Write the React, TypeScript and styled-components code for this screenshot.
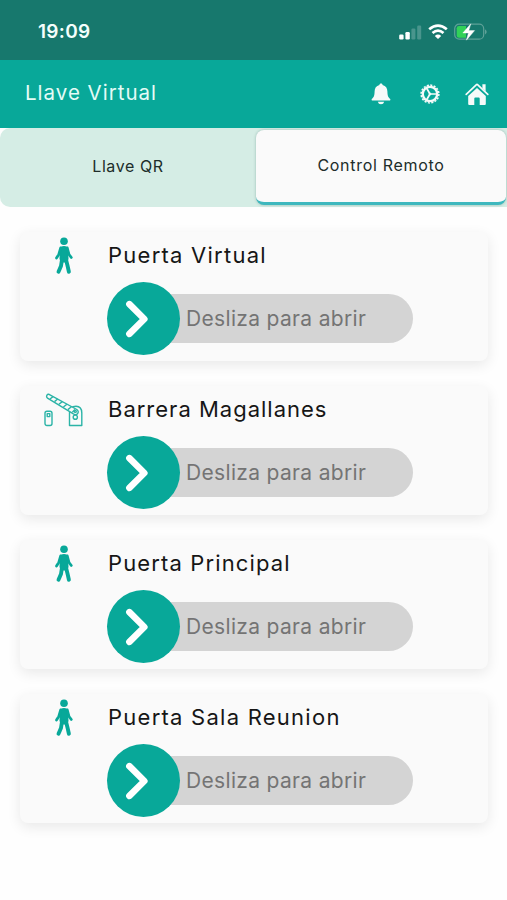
import React from "react";
import styled, { createGlobalStyle } from "styled-components";

const teal = "#08a899";

const GlobalStyle = createGlobalStyle`
  * { box-sizing: border-box; }
  html, body { margin: 0; background: #fefefe; }
  body { font-family: Inter, "Open Sans", sans-serif; }
`;

const Screen = styled.div`
  width: 100%;
  max-width: 507px;
  height: 900px;
  overflow: hidden;
  background: #fefefe;
  display: flex;
  flex-direction: column;
`;

const StatusBar = styled.div`
  height: 60px;
  flex: none;
  padding: 3px 20px 0 38px;
  background: #17786d;
  color: #f4fffc;
  display: flex;
  align-items: center;
  justify-content: space-between;
`;

const Clock = styled.time`
  font-size: 19px;
  font-weight: 600;
  letter-spacing: 0.3px;
`;

const StatusIcons = styled.div`
  display: flex;
  align-items: center;
  gap: 6px;
`;

const Header = styled.header`
  height: 68px;
  flex: none;
  padding: 0 18px 0 25px;
  background: ${teal};
  color: #e4fbf6;
  display: flex;
  align-items: center;
  justify-content: space-between;
`;

const Title = styled.h1`
  margin: 0;
  padding-bottom: 2px;
  font-size: 20.5px;
  font-weight: 400;
  line-height: 26px;
  letter-spacing: 1px;
`;

const Actions = styled.div`
  display: flex;
  align-items: center;
`;

const IconButton = styled.button<{ $gap?: number }>`
  border: 0;
  padding: 0;
  margin-left: ${(p) => p.$gap ?? 0}px;
  background: none;
  color: #f5faf9;
  display: flex;
`;

const Tabs = styled.nav`
  height: 79px;
  flex: none;
  background: #d5ede5;
  border-radius: 10px 0 0 10px;
  display: flex;
  padding: 2px 1px 2px 0;
`;

const Tab = styled.button<{ $active?: boolean }>`
  flex: ${(p) => (p.$active ? "0 0 250px" : "1")};
  border: 0;
  border-bottom: 3px solid ${(p) => (p.$active ? "#3eb8be" : "transparent")};
  border-radius: 8px;
  padding: ${(p) => (p.$active ? "0 0 2px" : "0")};
  background: ${(p) => (p.$active ? "#fafafa" : "transparent")};
  box-shadow: ${(p) => (p.$active ? "0 0 3px rgba(0, 70, 60, 0.3)" : "none")};
  color: #202d2a;
  font: 400 16px/20px Inter, sans-serif;
  letter-spacing: ${(p) => (p.$active ? 0.7 : 0.6)}px;
`;

const List = styled.main`
  display: flex;
  flex-direction: column;
  gap: 25px;
  padding: 25px 19px 0 20px;
`;

const Card = styled.section`
  height: 129px;
  border-radius: 8px;
  background: #fafafa;
  box-shadow: 0 4px 14px rgba(0, 0, 0, 0.09);
  display: grid;
  grid-template-columns: 87px 1fr;
  grid-template-rows: 50px 73px;
`;

const CardIcon = styled.div`
  display: flex;
  justify-content: center;
  padding-top: 5px;
  color: ${teal};
`;

const CardName = styled.h2<{ $tracking: number }>`
  margin: 0;
  padding: 9px 0 0 1px;
  color: #161616;
  font-size: 22px;
  font-weight: 400;
  line-height: 28px;
  letter-spacing: ${(p) => p.$tracking}px;
`;

const Slider = styled.div`
  grid-column: 2;
  width: 306px;
  display: flex;
  align-items: center;
`;

const Knob = styled.button`
  width: 73px;
  height: 73px;
  flex: none;
  border: 0;
  border-radius: 50%;
  padding: 0 14px 0 0;
  background: ${teal};
  color: #fff;
  display: flex;
  align-items: center;
  justify-content: center;
`;

const Track = styled.div`
  flex: 1;
  height: 49px;
  margin-left: -37px;
  padding-left: 43px;
  border-radius: 0 25px 25px 0;
  background: #d4d4d4;
  color: #747474;
  font-size: 21px;
  line-height: 50px;
  letter-spacing: 0.33px;
  white-space: nowrap;
`;

const KnobLayer = styled.div`
  display: flex;
  z-index: 1;
`;

const Signal = () => (
  <svg width="24" height="16" viewBox="0 0 24 16" fill="#fff">
    <rect x="1.2" y="10.5" width="4.4" height="5" rx="1.2" />
    <rect x="7.4" y="8" width="4.4" height="7.5" rx="1.2" />
    <rect x="13.4" y="4.5" width="4" height="11" rx="1.2" opacity=".22" />
    <rect x="19.2" y="1.5" width="4" height="14" rx="1.2" opacity=".22" />
  </svg>
);

const Wifi = () => (
  <svg width="20" height="16" viewBox="0 0 20 16" fill="none" stroke="#fff" strokeWidth="2.7">
    <path d="M1.2 5.3Q10-2.2 18.8 5.3" />
    <path d="M4.5 9.1Q10 4.2 15.5 9.1" />
    <path d="M10 15 6.8 11.9Q10 9.3 13.2 11.9Z" fill="#fff" stroke="none" />
  </svg>
);

const Battery = () => (
  <svg width="33" height="18" viewBox="0 0 33 18">
    <rect x="0.7" y="1.2" width="29" height="15" rx="4.5" fill="none" stroke="#5fa198" strokeWidth="1.2" />
    <path d="M31 6.3q3.4 2.6 0 5.2Z" fill="#5fa198" />
    <path d="M5 3H12V14.7H5Q2.7 14.7 2.7 12.5V5.2Q2.7 3 5 3Z" fill="#31d158" />
    <path d="M16.8.8 8.8 10h5.6l-2 7.2 8.2-9.6h-5.8Z" fill="#fff" stroke="#fff" strokeWidth=".4" />
  </svg>
);

const Bell = () => (
  <svg width="20" height="22" viewBox="0 0 20 22" fill="currentColor">
    <path d="M10 .5c1 0 1.6.7 1.6 1.6 3.3.8 4.7 3.2 4.8 6.4.1 4.3.8 5.8 2.6 7.2.7.6.5 1.9-.7 1.9H1.7C.5 17.6.3 16.3 1 15.7c1.8-1.4 2.5-2.9 2.6-7.2.1-3.2 1.5-5.6 4.8-6.4C8.4 1.2 9 .5 10 .5ZM6.8 18.7h6.4Q12.5 21.3 10 21.3T6.8 18.7Z" />
  </svg>
);

const Gear = () => (
  <svg width="22" height="22" viewBox="0 0 22 22" fill="none" stroke="currentColor">
    <circle cx="11" cy="11" r="7.2" strokeWidth="2.3" />
    <circle cx="11" cy="11" r="8.9" strokeWidth="1.5" strokeDasharray="2.1 1.395" />
    <path d="M11 11h7M11 11 7.5 5M11 11l-3.5 6" strokeWidth="1.7" />
    <circle cx="11" cy="11" r="1" fill="currentColor" />
  </svg>
);

const House = () => (
  <svg width="24" height="23" viewBox="0 0 24 23" fill="currentColor">
    <path d="m1.2 11.3 10-9.5q.8-.7 1.6 0l10 9.5" fill="none" stroke="currentColor" strokeWidth="1.7" strokeLinecap="round" strokeLinejoin="round" />
    <path d="M17.4 1.3h3.2v7l-3.2-3Z" />
    <path d="m12 4.9 8.8 8.2v8q0 1-1 1h-5.1v-6.5q0-1-1-1h-3.4q-1 0-1 1v6.5H4.2q-1 0-1-1v-8Z" />
  </svg>
);

const Pedestrian = () => (
  <svg width="20" height="38" viewBox="0 0 20 38" fill="none" stroke="currentColor" strokeLinecap="round" strokeLinejoin="round">
    <circle cx="10" cy="4.3" r="3.8" fill="currentColor" stroke="none" />
    <path d="M7 10.7q3-1.2 6 0L13.5 22 12 24.5H8.3L6.5 22Z" fill="currentColor" strokeWidth="2" />
    <path d="M6.7 11 4.8 17.5l-2.3 3.5M13.3 11l1.7 6.5 2.3 3" strokeWidth="2.8" />
    <path d="M8 22.5 7 29 4.5 34.8M12 22.5l1.6 6.5 1.3 5.8" strokeWidth="3.9" />
  </svg>
);

const Barrier = () => (
  <svg width="40" height="37" viewBox="0 -3 40 37" fill="none" stroke="currentColor" strokeWidth="1.4" strokeLinejoin="round" opacity=".85">
    <rect x="1" y="17.2" width="7" height="14.3" rx="2" />
    <rect x="3.2" y="19.6" width="2.6" height="3" />
    <path d="M25.5 31.5V19q0-6.8 6.5-6.8 5.8 0 5.8 6.8v12.5Z" />
    <path d="M5 .3 32.8 15.5q2.5 2 .7 4.2-1.8 2-4.5 0L3.5 4.2Q2 2.8 2.8 1.3 3.6 0 5 .3Z" fill="#fafafa" />
    <path d="m6 5 3-2.4m1.5 5 3.2-2.6m1.2 5.3 3.4-2.7m1.1 5.4 3.5-2.8m1 5.4 3.5-2.8m1 5.4 2.5-2.8" />
    <circle cx="31.3" cy="17.4" r="1" />
    <circle cx="31.3" cy="23.2" r="2.1" />
  </svg>
);

const Chevron = () => (
  <svg width="26" height="40" viewBox="0 0 26 40" fill="none" stroke="currentColor" strokeWidth="6.6" strokeLinecap="round" strokeLinejoin="round">
    <path d="m5.4 5.2 14.9 14.8L5.4 34.8" />
  </svg>
);

const doors = [
  { name: "Puerta Virtual", icon: <Pedestrian />, tracking: 1.25 },
  { name: "Barrera Magallanes", icon: <Barrier />, tracking: 1 },
  { name: "Puerta Principal", icon: <Pedestrian />, tracking: 1.13 },
  { name: "Puerta Sala Reunion", icon: <Pedestrian />, tracking: 1.25 },
];

export default function App() {
  return (
    <Screen>
      <GlobalStyle />
      <StatusBar>
        <Clock>19:09</Clock>
        <StatusIcons>
          <Signal />
          <Wifi />
          <Battery />
        </StatusIcons>
      </StatusBar>
      <Header>
        <Title>Llave Virtual</Title>
        <Actions>
          <IconButton aria-label="Notificaciones"><Bell /></IconButton>
          <IconButton aria-label="Ajustes" $gap={28}><Gear /></IconButton>
          <IconButton aria-label="Inicio" $gap={24}><House /></IconButton>
        </Actions>
      </Header>
      <Tabs>
        <Tab>Llave QR</Tab>
        <Tab $active>Control Remoto</Tab>
      </Tabs>
      <List>
        {doors.map((door) => (
          <Card key={door.name}>
            <CardIcon>{door.icon}</CardIcon>
            <CardName $tracking={door.tracking}>{door.name}</CardName>
            <Slider>
              <KnobLayer>
                <Knob aria-label="Abrir"><Chevron /></Knob>
              </KnobLayer>
              <Track>Desliza para abrir</Track>
            </Slider>
          </Card>
        ))}
      </List>
    </Screen>
  );
}
